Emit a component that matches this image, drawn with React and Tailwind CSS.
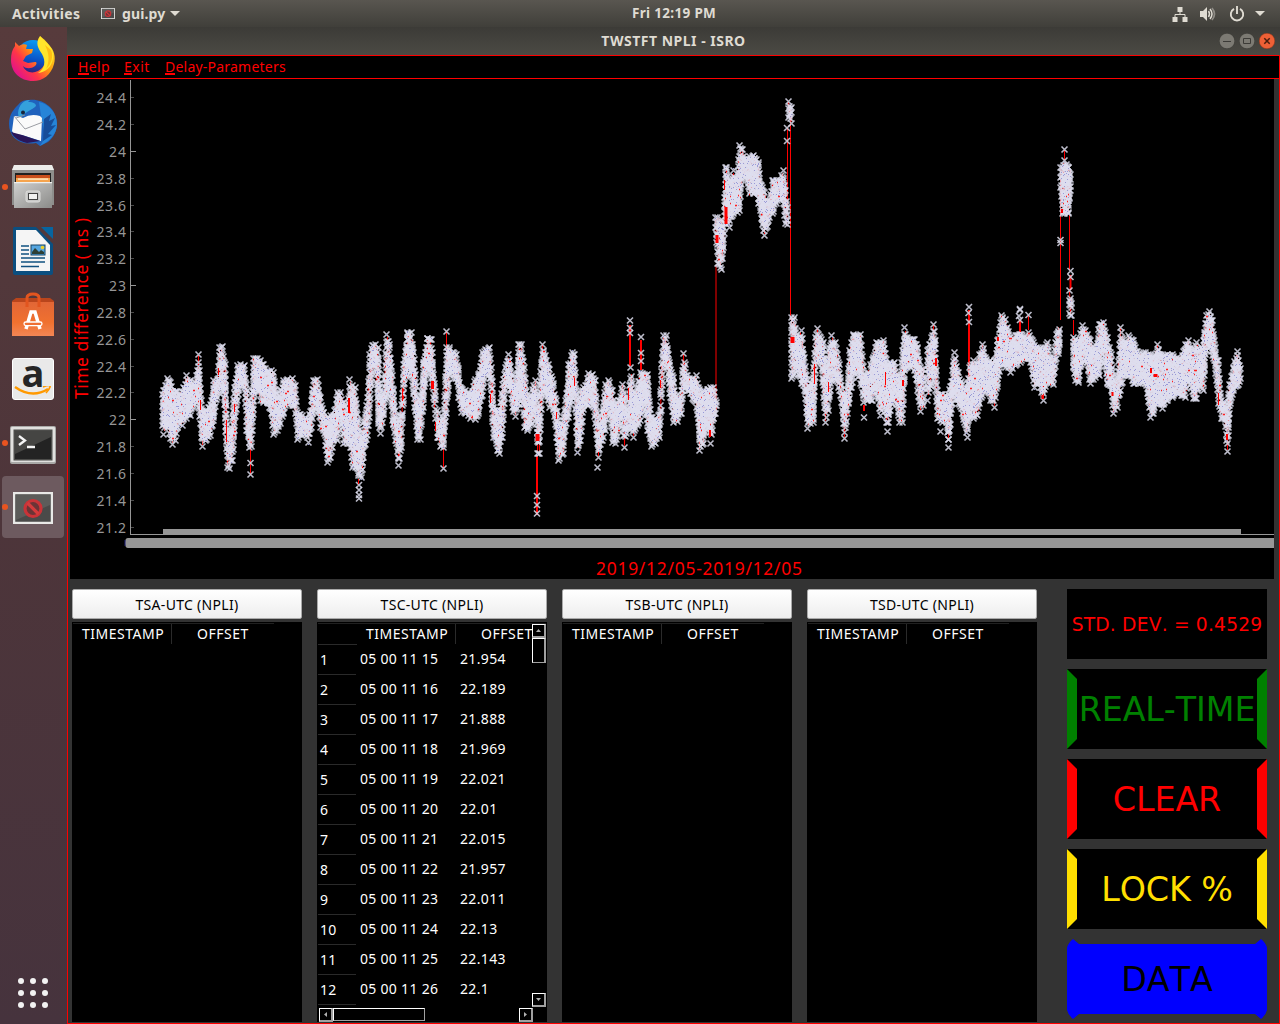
import React from "react";

/* Envelope of the time series: [x, top, bottom] in thirds of a pixel, relative to the origin. */
const BANDS = [
  {
    origin: [140, 300],
    cols: [
      [65,270,385],[70,260,412],[80,223,390],[90,235,425],[97,262,442],[105,262,430],[112,262,390],[125,265,385],[138,213,365],[150,228,355],[160,240,325],[168,215,315],[175,152,330],[182,290,420],[187,325,448],[195,320,430],[210,300,415],[220,228,370],[230,225,300],[236,130,290],[245,128,270],[254,180,365],[261,360,510],[267,400,513],[275,340,490],[283,250,400],[290,185,310],[300,180,265],[312,183,270],[318,240,400],[326,290,450],[333,300,448],[340,163,310],[350,163,275],[360,170,310],[370,180,315],[380,205,315],[392,200,350],[400,205,412],[410,280,400],[420,260,380],[430,228,345],[440,225,320],[455,223,325],[465,245,350],[470,325,428],[485,335,415],[495,340,410],[505,345,435],[512,290,390],[520,228,340],[530,225,325],[540,280,390],[550,325,400],[560,340,497],[570,335,480],[580,335,430],[590,265,430],[600,265,350],[610,295,440],[620,340,440],[628,225,440],[636,245,512],[645,250,510],[655,380,535],[662,420,540],[670,355,480],[680,280,415],[686,150,360],[695,125,225],[705,122,205],[713,130,380],[720,280,410],[730,265,350],[738,90,300],[748,120,280],[755,215,370],[765,320,430],[775,370,505],[783,300,450],[790,180,270],[800,85,235],[812,85,220],[822,165,330],[830,280,427],[840,290,427],[848,180,330],[860,103,215],[872,105,240],[880,210,300],[888,270,410],
    ],
  },
  {
    origin: [420, 300],
    cols: [
      [50,320,420],[60,350,448],[70,340,450],[78,130,350],[88,130,215],[98,145,245],[108,150,245],[115,200,300],[122,253,345],[135,258,348],[150,270,365],[165,225,367],[175,210,350],[185,145,295],[195,135,230],[207,130,245],[212,190,320],[220,310,420],[230,320,460],[238,320,470],[246,240,420],[255,190,280],[265,150,260],[275,215,330],[285,250,358],[295,120,320],[303,120,295],[312,190,390],[322,300,400],[335,255,380],[345,230,335],[352,350,470],[358,240,470],[365,120,280],[375,155,290],[388,195,330],[400,245,338],[408,290,420],[415,360,490],[428,350,470],[435,290,400],[445,180,350],[455,145,300],[463,150,300],[470,310,465],[480,260,430],[490,250,325],[505,208,325],[515,210,310],[525,230,380],[533,360,482],[545,325,430],[555,240,400],[565,228,305],[575,260,435],[585,305,438],[595,290,400],[605,240,350],[613,280,450],[622,330,395],[629,190,390],[640,270,420],[650,255,385],[660,205,370],[672,210,310],[682,210,400],[692,340,448],[705,345,440],[718,330,420],[724,180,340],[730,95,210],[738,95,210],[748,185,290],[758,220,375],[770,285,372],[782,260,350],[790,148,265],[800,215,280],[815,222,305],[828,215,330],[838,270,460],[848,260,440],[860,255,380],[870,250,440],[880,250,365],[890,290,340],
    ],
  },
  {
    origin: [690, 80],
    cols: [
      [76,400,450],[82,400,560],[92,405,578],[100,430,510],[104,250,440],[109,250,430],[116,310,450],[128,260,410],[140,295,405],[148,185,400],[155,195,305],[165,225,300],[178,218,350],[188,213,348],[198,225,345],[205,240,380],[212,305,425],[222,325,475],[235,360,430],[245,288,410],[258,290,380],[268,290,365],[278,260,365],[285,320,440],[292,380,460],
    ],
  },
  { origin: [690, 80], cols: [[295,52,120],[302,70,138],[305,90,138]] },
  {
    origin: [690, 80],
    cols: [
      [304,700,905],[312,700,890],[320,760,880],[332,740,920],[342,820,940],[350,890,1055],[360,910,1040],[370,850,1035],[376,760,900],[382,733,850],[392,765,860],[400,775,960],[406,860,1035],[415,800,1000],[424,755,910],[435,775,910],[446,840,940],[455,930,1000],[463,910,1085],[470,930,1010],[478,800,965],[488,750,900],[500,755,880],[510,750,920],[520,870,975],[530,875,970],[545,825,970],[558,775,930],[570,775,1015],[580,770,980],[590,840,1063],[600,835,1000],[612,835,960],[628,895,1035],[636,800,1035],[643,730,880],[652,760,870],[660,765,870],[672,765,880],[682,790,940],[690,850,1003],[700,850,980],
    ],
  },
  {
    origin: [900, 120],
    cols: [
      [82,680,850],[92,640,800],[98,600,770],[106,650,820],[112,800,905],[125,810,915],[135,815,910],[145,810,990],[155,740,860],[163,685,830],[173,745,860],[185,780,890],[200,795,960],[207,730,900],[218,710,905],[230,720,895],[245,660,835],[258,705,820],[270,710,850],[282,710,870],[292,650,800],[302,575,740],[315,585,750],[330,640,765],[345,635,745],[360,630,735],[372,640,725],[385,625,725],[395,650,770],[403,665,810],[415,670,800],[428,675,850],[440,655,790],[450,700,800],[460,700,802],[468,630,725],[480,595,695],
    ],
  },
  { origin: [900, 120], cols: [[480,130,210],[485,130,290],[493,110,290],[505,130,290],[512,140,210]] },
  { origin: [900, 120], cols: [[508,500,590],[517,530,610]] },
  {
    origin: [900, 120],
    cols: [
      [518,640,750],[525,645,790],[535,650,795],[545,605,735],[555,620,730],[570,650,800],[585,680,780],[598,600,775],[608,595,695],[620,640,800],[632,690,820],[640,770,890],[650,760,870],[659,610,820],[670,660,775],[685,635,775],[700,650,800],[715,690,800],[735,685,800],[750,690,900],[760,700,890],[770,660,860],[785,700,875],[800,690,850],[817,690,840],[830,700,830],[845,695,835],[855,660,840],[865,650,780],[878,690,845],[888,655,845],[898,680,800],[908,650,820],[918,575,700],[926,563,690],[936,590,715],[946,690,770],[955,710,860],[962,830,905],[972,835,905],[980,850,1003],[988,780,890],[998,730,820],[1010,682,805],[1022,730,805],
    ],
  },
];

/* Outlying samples, in pixels. */
const OUTLIERS = [
  [250.5,463],[250.5,474.5],[359,485],[359,490],[359,495],[359,498.5],[443.5,468.5],[446.5,331.5],
  [537,496],[537,505],[537,513.5],[630,320.5],[630,328],[630,333],[641,337],[641,353],[641,361],[597.5,467.5],
  [787,128],[787,141],[969,307],[968.5,313],[969,322],[864,417.5],[940.5,431.5],[1020,310],[1019,316],[1020,320],[1028.5,315],
  [1064.5,149.5],[1060.5,240],[1060.5,243],[1070.5,271],[1070.5,277],[1020,309],
];

const RED_LINES = [
  [250.5,440,475,1],[537,455,515,2],[716,265,400,1],[787.5,128,205,1],[790.5,105,320,1],[630,325,366,2],[641,340,370,2],
  [969,310,395,2],[1060.5,180,320,1],[1069.5,215,270,1],[1070.5,275,290,2],[1073.5,320,335,1],[446.5,331,380,1],[443.5,445,468,1],
  [1064.5,150,160,1],[1020,320,334,2],[1028.5,315,330,1],
];

/* Stretches where the connecting line stays visible between samples. */
const RED_GAPS = [
  [200.5,400,410,1],[218.5,368,375,1],[226.5,420,442,1],[234.5,404,412,1],[349,398,413,2],[358.5,479,484,1],[402.5,388,401,1],
  [432.5,381,389,3],[435.5,422,431,1],[490.5,394,403,1],[537.5,434,441,4],[556.5,412,419,1],[574.5,378,386,1],[628.5,388,400,1],
  [660.5,380,388,1],[710,430,437,2],[717,235,243,3],[724.5,180,190,1],[726,207,224,3],[792.5,337,343,4],[814.5,364,384,1],
  [828.5,382,392,1],[864,405,411,2],[885.5,372,385,1],[936,358,366,2],[998,337,341,2],[1151,368,373,2],[1155.5,374,377,4],
  [1218.500,393,405,1],[1227,434,440,2],[1042.500,395,399,2],[1112.500,392,396,2],[1062,209,213,2],[903,380,386,2],
];

function rng(seed) {
  let s = seed;
  return () => {
    s = (s * 1664525 + 1013904223) % 4294967296;
    return s / 4294967296;
  };
}

function buildSeries() {
  const rand = rng(7);
  const groups = [];
  const lines = [];
  const dots = [];
  const reds = [];
  const cross = (x, y) => `M${x - 3} ${y - 3}l6 6m0 -6l-6 6`;
  for (const { origin, cols } of BANDS) {
    let prev = null;
    let flip = 0;
    const line = [];
    for (let i = 0; i < cols.length - 1; i++) {
      const a = cols[i];
      const b = cols[i + 1];
      const steps = Math.max(1, Math.round((b[0] - a[0]) / 2.6));
      for (let k = 0; k < steps; k++) {
        const t = k / steps;
        const x = Math.round(origin[0] + (a[0] + (b[0] - a[0]) * t) / 3) + 0.5;
        const top = origin[1] + (a[1] + (b[1] - a[1]) * t) / 3 + 3.5;
        const bot = origin[1] + (a[2] + (b[2] - a[2]) * t) / 3 - 3.5;
        const h = Math.max(1, bot - top);
        const n = Math.max(2, Math.round(h / 6.2));
        let d = "";
        for (let j = 0; j < n; j++) {
          const edge = j === 0 && k === 0 ? 0 : j === n - 1 && k === 0 ? 1 : (j + rand()) / n;
          const y = Math.round(top + h * edge) + 0.5;
          d += cross(x, y);
          if (rand() < 0.28) dots.push(`M${x - 0.5} ${y + Math.round(rand() * 4 - 2)}h1`);
          if (rand() < 0.03) reds.push(`M${x - 0.5} ${y + 1}h${rand() < 0.3 ? 2 : 1}`);
        }
        groups.push(d);
        flip = 1 - flip;
        line.push(`${prev === null ? "M" : "L"}${x} ${flip ? top + 1 : bot - 1}`);
        prev = x;
      }
    }
    lines.push(line.join(""));
  }
  return { groups, lines, dots: dots.join(""), reds: reds.join(""), outliers: OUTLIERS.map(([x, y]) => cross(x, y)) };
}

const SERIES = buildSeries();
const Y_LABELS = ["24.4","24.2","24","23.8","23.6","23.4","23.2","23","22.8","22.6","22.4","22.2","22","21.8","21.6","21.4","21.2"];

function Chart() {
  return (
    <svg viewBox="70 79 1204 500" className="block h-[500px] w-[1204px] shrink-0 bg-black" fontFamily="'Noto Sans', sans-serif">
      {Y_LABELS.map((l, i) => {
        const y = Math.floor(97.6 + i * 26.85);
        const whole = !l.includes(".");
        return (
          <g key={l}>
            <text x="126" y={y + 5.5} textAnchor="end" fontSize="14" fill="#969696" textLength={whole ? 17 : 29.5}>{l}</text>
            <rect x="131" y={y} width={whole ? 5 : 3} height="1" fill={whole ? "#969696" : "#4a4a4a"} />
          </g>
        );
      })}
      <rect x="130" y="80" width="1" height="455" fill="#969696" />
      <rect x="130" y="534" width="1144" height="1" fill="#969696" />
      <rect x="163" y="529" width="1078" height="6" fill="#969696" />
      <path d="M1274 538H128q-3 0-3 5t3 5H1274z" fill="#969696" />
      <path d="M125 540v6" stroke="#20207a" strokeWidth="1" />
      <text transform="translate(88 399) rotate(-90)" fontSize="17.500" fill="#ff0000" textLength="181">Time difference ( ns )</text>
      <text x="596" y="574.500" fontSize="17.500" fill="#ff0000" textLength="206">2019/12/05-2019/12/05</text>
      <g fill="none" stroke="#ff0000">
        {SERIES.lines.map((d, i) => <path key={i} d={d} strokeWidth="1" />)}
        {RED_LINES.map(([x, a, b, w], i) => <path key={i} d={`M${x} ${a}V${b}`} strokeWidth={w} />)}
      </g>
      <g fill="none" stroke="#dedeee" strokeWidth="1.600" strokeOpacity="0.850">
        {SERIES.groups.map((d, i) => <path key={i} d={d} />)}
        {SERIES.outliers.map((d, i) => <path key={i} d={d} />)}
      </g>
      <path d={SERIES.dots} stroke="#9a9ad6" strokeWidth="1" />
      <path d={SERIES.reds} stroke="#ff2020" strokeWidth="1.500" />
      <g stroke="#ff0000">
        {RED_GAPS.map(([x, a, b, w], i) => <path key={i} d={`M${x} ${a}V${b}`} strokeWidth={w} />)}
      </g>
    </svg>
  );
}

function ForbiddenFrame({ className }) {
  return (
    <svg viewBox="0 0 40 32" className={className}>
      <rect x="1" y="1" width="38" height="30" fill="#4a4a49" stroke="#e9e9e7" strokeWidth="2.500" />
      <path d="M3 3h34v10L3 28z" fill="#5c5c5a" />
      <circle cx="20" cy="16.500" r="8" fill="#6b3436" stroke="#c93338" strokeWidth="3.200" />
      <path d="M14.500 11l11 11" stroke="#d43b3c" strokeWidth="3.200" />
    </svg>
  );
}

function Firefox() {
  return (
    <svg viewBox="0 0 48 48" className="size-12">
      <defs>
        <linearGradient id="fx" x1="1" y1="0" x2="0.100" y2="0.800">
          <stop offset="0.150" stopColor="#ffe226" /><stop offset="0.500" stopColor="#ff980e" /><stop offset="0.750" stopColor="#ff3647" /><stop offset="1" stopColor="#e31587" />
        </linearGradient>
        <linearGradient id="fb" x1="0.600" y1="0" x2="0.400" y2="1">
          <stop offset="0" stopColor="#0a9cf5" /><stop offset="0.600" stopColor="#0a4fc4" /><stop offset="1" stopColor="#3a1a6b" />
        </linearGradient>
      </defs>
      <circle cx="24" cy="22" r="17" fill="url(#fb)" />
      <path d="M31 1c5 4 7 6 9 9 5 5 7 12 5 19-3 11-11 17-21 17C11 46 2 37 2 25c0-6 1-10 4-14V7l4 4c3-2 6-2 8-1l-1 4h7l-1 4-6 3-3 5 5 2 7-1c2 0 2 2 0 4-4 3-9 3-12 0 2 6 9 8 15 5 9-5 9-13 5-20-3-5-5-9-2-15z" fill="url(#fx)" />
      <path d="M31 1c-5 7-2 12 2 18 4 7 3 15-4 19 8-1 14-6 15-15 1-6-2-10-4-13-2-2-6-5-9-9z" fill="#ffe52b" />
      <path d="M36 10c4 8 5 16 1 24 5-4 8-13 5-19z" fill="#ffbd14" />
    </svg>
  );
}

function Thunderbird() {
  return (
    <svg viewBox="0 0 48 48" className="size-12">
      <path d="M20 1C32-1 48 8 48 25c0 9-6 16-9 18l-8 4-4-3C10 47 0 38 0 25 0 15 5 10 9 6c3-4 6-5 11-5z" fill="#1f62bd" />
      <path d="M30 3c10 2 18 11 18 22 0 11-9 18-17 22 5-7 4-10 4-15l-3-15z" fill="#2684d8" />
      <path d="M9 14C10 5 15 1 21 1l-2 2c6 0 8 2 8 4-5 5-11 5-17 14z" fill="#34a1dc" />
      <path d="M35 20l7-5-2 7 6-3-4 8 5-1-8 9 4 1-9 6z" fill="#174d9a" />
      <path d="M3 32l2-15q5 0 9 2 8-5 17-2l2 2-1 23-19-6-8-1z" fill="#fafafa" />
      <path d="M5 17l11 13 18-7M7 19l9-3" fill="none" stroke="#909298" strokeWidth="0.900" />
      <path d="M2 33l11 3 18 6-13 2C10 42 5 39 2 33z" fill="#2a1659" />
      <circle cx="14" cy="13.500" r="2" fill="#17243b" />
    </svg>
  );
}

function Files() {
  return (
    <svg viewBox="0 0 48 48" className="size-12">
      <defs><linearGradient id="fl" x1="0" y1="0" x2="1" y2="1"><stop offset="0" stopColor="#d0d0cf" /><stop offset="1" stopColor="#8b8b89" /></linearGradient></defs>
      <path d="M5 2h38l2 5v35H3V7z" fill="#8e8e8c" />
      <path d="M5 2h38l2 5H3z" fill="#ececea" />
      <rect x="6" y="10" width="36" height="11" fill="#202020" />
      <path d="M7 12h34v8H7z" fill="#c94f1c" /><path d="M7 15h34v5H7z" fill="#f6a44e" /><path d="M9 15.500h30v1.200H9z" fill="#fff2d7" />
      <path d="M5 19h38v26H5z" fill="url(#fl)" /><path d="M5 19h38v1.300H5z" fill="#efefed" />
      <rect x="17" y="28" width="14" height="11" rx="2" fill="#c8c8c7" stroke="#dededc" />
      <rect x="19.500" y="30.500" width="9" height="6" fill="#f2f2f1" stroke="#444" />
    </svg>
  );
}

function Writer() {
  return (
    <svg viewBox="0 0 48 48" className="size-12">
      <path d="M5 0h22l17 17v29q0 2-2 2H6q-2 0-2-2V1z" fill="#0b4f80" />
      <path d="M32 0h12v12z" fill="#0765a0" />
      <path d="M7 3h20l14 15v26H7z" fill="#f5f5f5" />
      <path d="M12 19h8M12 23h8M12 27h8M12 31h24M12 35h24M12 39.500h18" stroke="#115180" strokeWidth="1.700" />
      <rect x="22" y="18" width="14" height="10" fill="#55a6e0" stroke="#164464" />
      <path d="M23 27v-2l3-4 4 4 2-2 3 2v2z" fill="#2d3f34" /><circle cx="33.500" cy="20.500" r="1.800" fill="#ecd02a" />
    </svg>
  );
}

function Software() {
  return (
    <svg viewBox="0 0 48 48" className="size-12">
      <defs><linearGradient id="sw" x1="0" y1="0" x2="0" y2="1"><stop offset="0" stopColor="#e26636" /><stop offset="0.600" stopColor="#f0712f" /><stop offset="1" stopColor="#f38655" /></linearGradient></defs>
      <path d="M3 10l4-3h34l4 3v6H3z" fill="#b9451c" />
      <path d="M3 11h42v34H3z" fill="url(#sw)" />
      <path d="M18 16V7q0-4 6-4t6 4v9" fill="none" stroke="#e2551f" strokeWidth="3" />
      <path d="M17 38l5-17h4l5 17" fill="none" stroke="#fff" strokeWidth="3.500" />
      <rect x="15" y="31" width="18" height="3.600" rx="1.800" fill="#ee6f33" stroke="#fff" strokeWidth="1.300" />
    </svg>
  );
}

function Amazon() {
  return (
    <div className="flex size-[42px] flex-col items-center rounded-[3px] border border-white bg-[#e9e9e9]">
      <span className="h-[27px] font-['Open_Sans',sans-serif] text-[38px] leading-[26px] font-bold text-[#252525]">a</span>
      <svg viewBox="0 0 38 12" className="h-3 w-[38px] shrink-0">
        <path d="M1 1q17 12 33 2" fill="none" stroke="#f90" strokeWidth="2.400" />
        <path d="M29 1q8-3 7 0t-4 6" fill="none" stroke="#f90" strokeWidth="1.700" />
      </svg>
    </div>
  );
}

function Terminal() {
  return (
    <svg viewBox="0 0 46 38" className="mt-[3px] h-[38px] w-[46px]">
      <rect width="46" height="38" rx="2" fill="#a9a9a7" />
      <rect x="1" y="1" width="44" height="35" rx="1" fill="#e1e1df" />
      <rect x="3.500" y="3.500" width="39" height="31" fill="#4c4c4a" />
      <rect x="5" y="5" width="36" height="28" fill="#232323" />
      <path d="M5 5h36v6L5 28z" fill="#454543" />
      <path d="M9 10l6 4.500L9 19M17 21h8" fill="none" stroke="#f4f4f4" strokeWidth="2.300" />
    </svg>
  );
}

const LAUNCHERS = [
  { icon: <Firefox /> },
  { icon: <Thunderbird /> },
  { icon: <Files />, running: true },
  { icon: <Writer /> },
  { icon: <Software /> },
  { icon: <Amazon /> },
  { icon: <Terminal />, running: true },
  { icon: <ForbiddenFrame className="mt-[2px] h-8 w-10" />, running: true, active: true },
];

function Launcher() {
  return (
    <div className="flex w-[67px] shrink-0 flex-col bg-linear-to-b from-[#573b3c] via-[#4d353a] to-[#46333d]">
      <div className="flex flex-col gap-[2px] pt-[1px] pl-[2px]">
        {LAUNCHERS.map((l, i) => (
          <div key={i} className={`relative flex h-[62px] w-[62px] items-center justify-center rounded ${l.active ? "bg-[#6d5a5f]" : ""}`}>
            {l.running && <span className="absolute top-[28px] left-0 size-[6px] rounded-full bg-[#e95420]" />}
            {l.icon}
          </div>
        ))}
      </div>
      <div className="mt-auto mb-4 ml-[18px] grid w-[30px] grid-cols-3 gap-[6px]">
        {Array.from({ length: 9 }, (_, i) => <span key={i} className="size-[6px] rounded-full bg-[#f2f2f2]" />)}
      </div>
    </div>
  );
}

function TopBar() {
  return (
    <div className="flex h-[27px] shrink-0 items-center bg-linear-to-b from-[#595650] to-[#403f3a] text-[14px] font-bold text-[#dfdbd2]">
      <div className="flex w-[632px] items-center pl-3">
        <span className="w-[89px] tracking-[0.330px]">Activities</span>
        <ForbiddenFrame className="h-[11px] w-[14px]" />
        <span className="ml-[7px] w-[44px] tracking-[0.100px]">gui.py</span>
        <span className="ml-1 border-x-[5px] border-t-[5px] border-x-transparent border-t-[#dfdbd2]" />
      </div>
      <span className="text-[13.500px] tracking-[0.320px] whitespace-nowrap">Fri 12:19 PM</span>
      <div className="flex flex-1 items-center justify-end pr-[15px]">
        <svg viewBox="0 0 16 16" className="size-4"><path d="M5.500 1h5v5h-5zM.500 11h5v5h-5zM10.500 11h5v5h-5z" fill="#dfdbd2" /><path d="M8 6v2.500M3 11V8.500h10V11" fill="none" stroke="#dfdbd2" /></svg>
        <svg viewBox="0 0 16 16" className="ml-3 size-4"><path d="M0 5h3l4-4v14l-4-4H0z" fill="#dfdbd2" /><path d="M8.500 5q2 3 0 6M10 3q4 5 0 10" fill="none" stroke="#dfdbd2" strokeWidth="1.500" /><path d="M12 2q5 6 0 12" fill="none" stroke="#8e8b85" strokeWidth="1.700" /></svg>
        <svg viewBox="0 0 16 16" className="ml-[13px] size-4"><path d="M5 2.800a6.200 6.200 0 1 0 6 0M8 0v8" fill="none" stroke="#dfdbd2" strokeWidth="1.900" /></svg>
        <span className="ml-[10px] border-x-[5px] border-t-[5px] border-x-transparent border-t-[#dfdbd2]" />
      </div>
    </div>
  );
}

function TitleBar() {
  return (
    <div className="grid h-[28px] shrink-0 grid-cols-[1fr_auto_1fr] items-center bg-linear-to-b from-[#3c3b37] to-[#4b4a44] font-bold text-[#dfdbd2]">
      <span />
      <span className="pb-[2px] text-[14px] tracking-[0.500px]">TWSTFT NPLI - ISRO</span>
      <div className="flex justify-end gap-1 pr-[5px]">
        <svg viewBox="0 0 16 16" className="size-4"><circle cx="8" cy="8" r="7.800" fill="#7c7a73" stroke="#2f2e2b" strokeWidth=".500" /><path d="M4 8.500h8" stroke="#3c3b37" /></svg>
        <svg viewBox="0 0 16 16" className="size-4"><circle cx="8" cy="8" r="7.800" fill="#7c7a73" stroke="#2f2e2b" strokeWidth=".500" /><path d="M4.500 5.500h7v5h-7z" fill="none" stroke="#3c3b37" /></svg>
        <svg viewBox="0 0 16 16" className="size-4"><circle cx="8" cy="8" r="7.800" fill="#ee6036" stroke="#8f3418" strokeWidth=".500" /><path d="M5.300 5.300l5.400 5.400m0-5.400l-5.400 5.400" stroke="#4a1d0d" strokeWidth="1.500" /></svg>
      </div>
    </div>
  );
}

function MenuItem({ first, rest, className }) {
  return (
    <span className={className}>
      <span className="inline-block h-[19px] border-b-2 border-[#ff0000]">{first}</span>{rest}
    </span>
  );
}

const ROWS = [
  ["15","21.954"],["16","22.189"],["17","21.888"],["18","21.969"],["19","22.021"],["20","22.01"],
  ["21","22.015"],["22","21.957"],["23","22.011"],["24","22.13"],["25","22.143"],["26","22.1"],
];

function ScrollButton({ d, className }) {
  return (
    <div className={`flex size-[14px] shrink-0 items-center justify-center border border-t-white border-r-2 border-r-[#a0a0a0] border-b-2 border-b-[#a0a0a0] border-l-white ${className}`}>
      <svg viewBox="0 0 5 5" className="size-[5px]"><path d={d} fill="#b0b0b0" /></svg>
    </div>
  );
}

function TablePanel({ title, rows }) {
  return (
    <div className="flex w-[230px] flex-col">
      <button className="h-[30px] rounded-[2px] border border-[#aaa] bg-linear-to-b from-white to-[#eeeeee] text-center text-[14px] leading-[29px] tracking-[0.300px] text-black">{title}</button>
      <div className="relative mt-[3px] h-[400px] overflow-hidden bg-black text-[14px] text-white">
        <div className={`mx-px mt-px flex h-[22px] border-t border-[#202020] leading-[20px] ${rows ? "" : "w-[201px]"}`}>
          {rows && <span className="w-[39px] shrink-0 border-b border-[#2a2a2a]" />}
          <span className="h-5 w-[99px] shrink-0 border-r border-[#2a2a2a] pl-[9px] tracking-[0.500px] whitespace-nowrap">TIMESTAMP</span>
          <span className="pl-[25px] tracking-[0.500px]">OFFSET</span>
        </div>
        {rows && (
          <>
            {rows.map(([s, v], i) => (
              <div key={s} className="flex h-[30px] items-center">
                <span className="ml-px flex h-full w-[38px] items-center border-b border-[#2a2a2a] pl-[2px] tracking-[0.200px]">{i + 1}</span>
                <span className="mb-[3px] ml-1 w-[100px] tracking-[0.300px]">05 00 11 {s}</span>
                <span className="mb-[3px] tracking-[0.350px]">{v}</span>
              </div>
            ))}
            <div className="absolute top-[2px] right-0 flex h-[383px] w-[15px] flex-col bg-black">
              <ScrollButton d="M0 4L2.500 1L5 4z" />
              <div className="h-[25px] w-[14px] border border-t-white border-r-2 border-r-[#a0a0a0] border-b-[#a0a0a0] border-l-white" />
              <ScrollButton d="M0 1L2.500 4L5 1z" className="mt-auto" />
            </div>
            <div className="absolute bottom-0 left-0 flex h-[15px] w-[216px] bg-black pt-px pl-[2px]">
              <ScrollButton d="M4 0L1 2.500L4 5z" />
              <div className="h-[13px] w-[92px] border border-t-white border-r-[#a0a0a0] border-b-[#a0a0a0] border-l-white" />
              <ScrollButton d="M1 0L4 2.500L1 5z" className="ml-auto" />
            </div>
          </>
        )}
      </div>
    </div>
  );
}

function BevelButton({ children, className }) {
  return (
    <button className={`h-20 w-[200px] border-10 border-y-transparent bg-black bg-clip-border text-center font-['DejaVu_Sans',sans-serif] text-[33.330px] leading-[62px] tracking-[-0.100px] whitespace-nowrap [font-kerning:none] ${className}`}>
      {children}
    </button>
  );
}

export default function App() {
  return (
    <div className="flex h-[1024px] w-[1280px] flex-col overflow-hidden bg-black font-['Noto_Sans',sans-serif]">
      <TopBar />
      <div className="flex min-h-0 flex-1">
        <Launcher />
        <div className="flex w-[1213px] flex-col">
          <TitleBar />
          <div className="flex min-h-0 flex-1 flex-col border border-[#ff0000] bg-[#333333]">
            <div className="flex h-[23px] shrink-0 border-b border-[#ff0000] bg-black pl-[10px] text-[14px] leading-[22px] text-[#ff0000]">
              <MenuItem first="H" rest="elp" className="w-[46px] tracking-[0.400px]" />
              <MenuItem first="E" rest="xit" className="w-[41px] tracking-[0.500px]" />
              <MenuItem first="D" rest="elay-Parameters" className="tracking-[0.220px]" />
            </div>
            <div className="pl-[2px]"><Chart /></div>
            <div className="mt-[10px] flex pl-1">
              <div className="flex gap-[15px]">
                <TablePanel title="TSA-UTC (NPLI)" />
                <TablePanel title="TSC-UTC (NPLI)" rows={ROWS} />
                <TablePanel title="TSB-UTC (NPLI)" />
                <TablePanel title="TSD-UTC (NPLI)" />
              </div>
              <div className="ml-[30px] flex flex-col gap-[10px]">
                <div className="h-[70px] w-[200px] bg-black text-center font-['DejaVu_Sans',sans-serif] text-[18.670px] leading-[72px] tracking-[0.200px] whitespace-nowrap text-[#ff0000] [font-kerning:none]">STD. DEV. = 0.4529</div>
                <BevelButton className="border-x-[#008000] text-[#008000]">REAL-TIME</BevelButton>
                <BevelButton className="border-x-[#ff0000] text-[#ff0000]">CLEAR</BevelButton>
                <BevelButton className="border-x-[#ffdf00] text-[#ffdf00]">LOCK %</BevelButton>
                <div className="relative flex h-20 w-[200px] items-center justify-center">
                  <svg viewBox="0 0 200 80" className="absolute inset-0 size-full"><path d="M0 9Q1 4 6 0L12 5H188L194 0Q199 4 200 9V71Q199 76 194 80L188 75H12L6 80Q1 76 0 71z" fill="#0000ff" /></svg>
                  <span className="relative pt-[2px] font-['DejaVu_Sans',sans-serif] text-[33.330px] leading-none text-black [font-kerning:none]">DATA</span>
                </div>
              </div>
            </div>
          </div>
        </div>
      </div>
    </div>
  );
}
